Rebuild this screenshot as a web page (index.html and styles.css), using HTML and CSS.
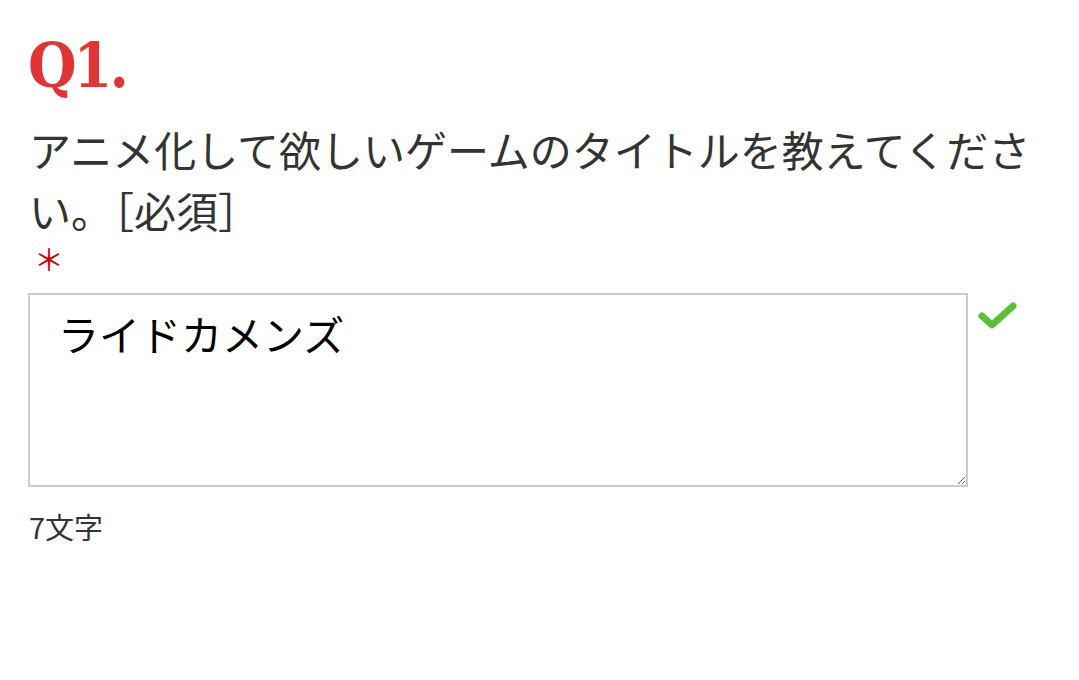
FILE: index.html
```html
<!DOCTYPE html>
<html lang="ja">
<head>
    <meta charset="UTF-8">
    <title>アンケート</title>
    <link rel="stylesheet" href="styles.css">
</head>
<body>
<div class="question">
    <div class="q-num">Q1.</div>
    <p class="q-text">アニメ化して欲しいゲームのタイトルを教えてください。［必須］</p>
    <div class="required">＊</div>
    <div class="answer-row">
        <textarea class="answer">ライドカメンズ</textarea>
        <svg class="check" width="42" height="32" viewBox="0 0 42 32">
            <path d="M5 17 L15 26 L36 7" fill="none" stroke="#5cbf3a" stroke-width="7" stroke-linecap="round" stroke-linejoin="round"/>
        </svg>
    </div>
    <div class="count">7文字</div>
</div>
</body>
</html>
```
FILE: styles.css
```css
body, div, p, textarea {
    margin: 0;
    padding: 0;
}

body {
    background: #fff;
    font-family: "Noto Sans CJK JP", "Noto Sans", sans-serif;
    color: #333;
}

.question {
    padding: 28px 28px 0 28px;
}

.q-num {
    font-family: "DejaVu Serif", serif;
    font-weight: bold;
    font-stretch: condensed;
    font-size: 62px;
    line-height: 76px;
    color: #e03535;
    letter-spacing: -3px;
}

.q-text {
    margin-top: 14px;
    font-size: 42px;
    line-height: 61px;
    padding-left: 1px;
}

.required {
    color: #c00;
    font-size: 30px;
    line-height: 30px;
    padding-top: 3px;
    padding-left: 6px;
}

.answer-row {
    display: flex;
    align-items: flex-start;
    margin-top: 20px;
}

.answer {
    width: 940px;
    height: 194px;
    box-sizing: border-box;
    border: 2px solid #ccc;
    padding: 10px 28px;
    font-family: "Noto Sans CJK JP", sans-serif;
    font-size: 41px;
    line-height: 56px;
    color: #000;
    background: #fff;
    resize: vertical;
}

.check {
    margin-left: 9px;
    margin-top: 6px;
}

.count {
    margin-top: 20px;
    font-size: 29px;
    line-height: 38px;
    padding-left: 1px;
}
```
